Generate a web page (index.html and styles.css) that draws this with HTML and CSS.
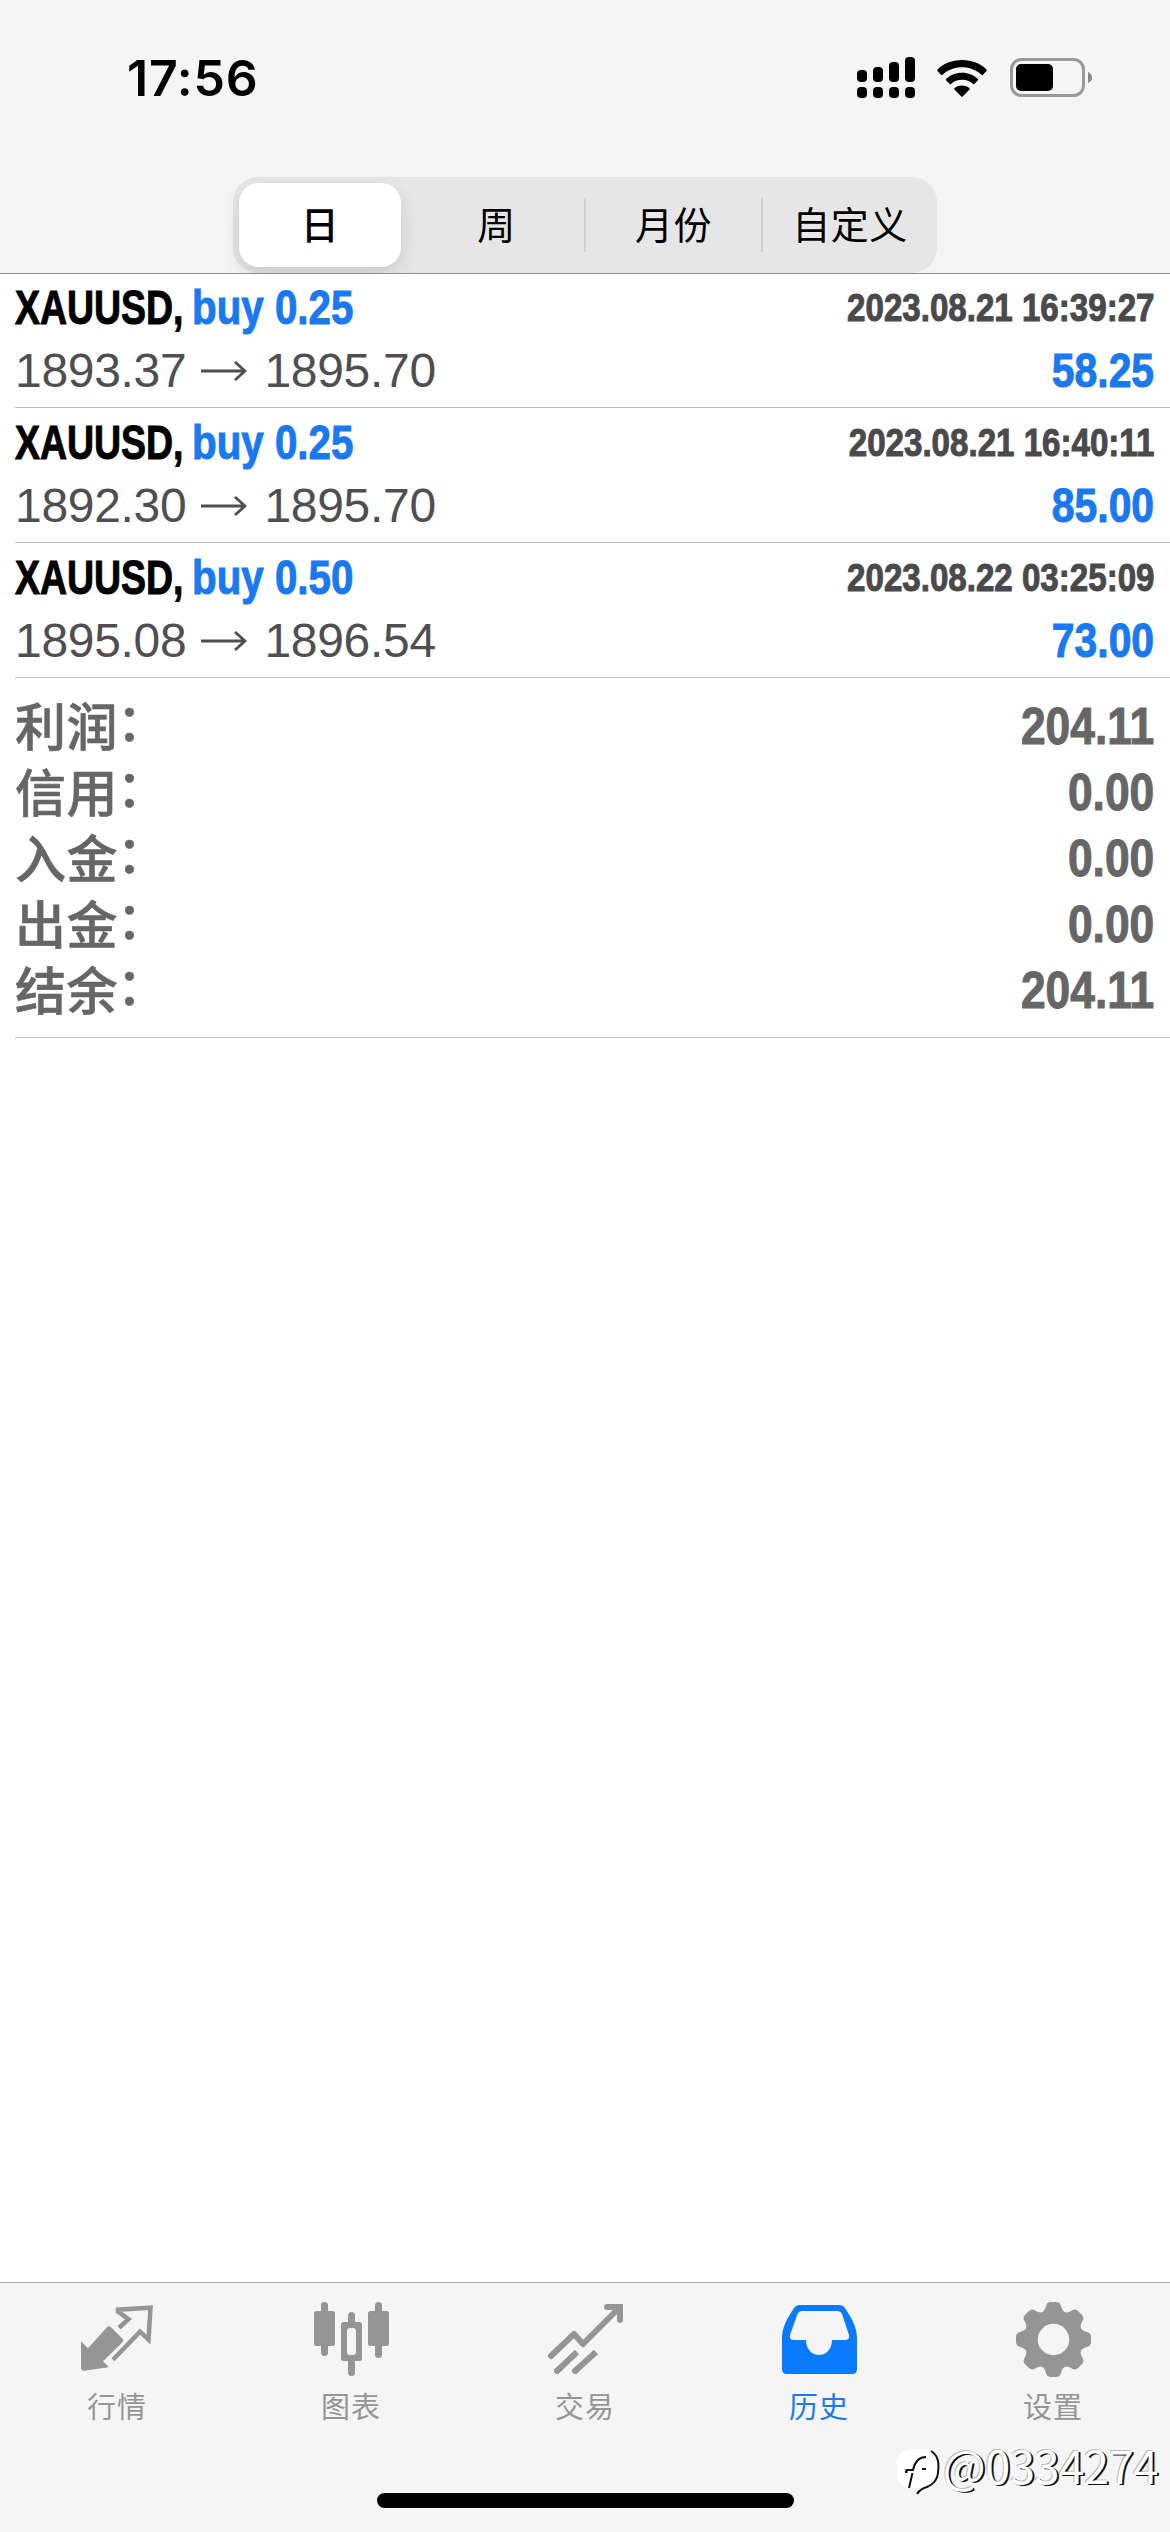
FILE: index.html
```html
<!DOCTYPE html>
<html lang="zh-CN">
<head>
<meta charset="utf-8">
<title>历史</title>
<link rel="stylesheet" href="styles.css">
</head>
<body>
<div class="screen">
  <header class="header">
    <div class="status">
      <span class="time">17:56</span>
      <div class="status-icons">
        <svg class="signal" width="58" height="42" viewBox="0 0 58 42">
          <rect x="0" y="13" width="10" height="12" rx="4"/><rect x="16" y="10" width="10" height="15" rx="4"/><rect x="32" y="5" width="10" height="20" rx="4"/><rect x="48" y="0" width="10" height="25" rx="4"/>
          <rect x="0" y="30" width="10" height="11" rx="4"/><rect x="16" y="30" width="10" height="11" rx="4"/><rect x="32" y="30" width="10" height="11" rx="4"/><rect x="48" y="30" width="10" height="11" rx="4"/>
        </svg>
        <svg class="wifi" width="50" height="37" viewBox="0 0 50 37">
          <path d="M25 0C35 0 43.500 3.500 49.500 9.500Q50 10.300 49.500 11L46 14.700Q45.300 15.300 44.500 14.700C39 9.800 32.500 7.200 25 7.200S11 9.800 5.500 14.700Q4.700 15.300 4 14.700L.5 11Q0 10.300.5 9.500C6.500 3.500 15 0 25 0Z"/>
          <path d="M25 12.700C31.500 12.700 37 15 41 19Q41.500 19.700 41 20.300L37.500 23.800Q36.700 24.500 36 23.900C33 21.200 29.200 19.800 25 19.800S17 21.200 14 23.900Q13.300 24.500 12.500 23.800L9 20.300Q8.500 19.700 9 19C13 15 18.500 12.700 25 12.700Z"/>
          <path d="M25 25.500C28 25.500 30.600 26.500 32.500 28.200Q33 29 32.500 29.600L25.700 36.500Q25 37.100 24.300 36.500L17.500 29.600Q17 29 17.500 28.200C19.400 26.500 22 25.500 25 25.500Z"/>
        </svg>
        <svg class="battery" width="82" height="40" viewBox="0 0 82 40">
          <rect x="1.500" y="1.500" width="72" height="36" rx="10" fill="none" stroke="#999" stroke-width="3"/>
          <rect x="6" y="6" width="37" height="27" rx="5"/>
          <path d="M78 14Q82 16 82 19.500T78 25Z" fill="#888"/>
        </svg>
      </div>
    </div>
    <div class="segments">
      <span class="segment selected">日</span>
      <span class="segment">周</span>
      <span class="segment ruled">月份</span>
      <span class="segment ruled">自定义</span>
    </div>
  </header>
  <main class="content">
    <section class="deal">
      <div class="line"><span class="title"><span class="symbol">XAUUSD,</span><span class="side">buy 0.25</span></span><span class="date">2023.08.21 16:39:27</span></div>
      <div class="line"><span class="prices">1893.37 <svg class="arrow" viewBox="0 0 46 20"><path d="M0 10H44M34 1L44 10L34 19"/></svg> 1895.70</span><span class="gain">58.25</span></div>
    </section>
    <section class="deal">
      <div class="line"><span class="title"><span class="symbol">XAUUSD,</span><span class="side">buy 0.25</span></span><span class="date">2023.08.21 16:40:11</span></div>
      <div class="line"><span class="prices">1892.30 <svg class="arrow" viewBox="0 0 46 20"><path d="M0 10H44M34 1L44 10L34 19"/></svg> 1895.70</span><span class="gain">85.00</span></div>
    </section>
    <section class="deal">
      <div class="line"><span class="title"><span class="symbol">XAUUSD,</span><span class="side">buy 0.50</span></span><span class="date">2023.08.22 03:25:09</span></div>
      <div class="line"><span class="prices">1895.08 <svg class="arrow" viewBox="0 0 46 20"><path d="M0 10H44M34 1L44 10L34 19"/></svg> 1896.54</span><span class="gain">73.00</span></div>
    </section>
    <section class="summary">
      <div class="total"><span class="label">利润<span class="colon">：</span></span><span class="amount">204.11</span></div>
      <div class="total"><span class="label">信用<span class="colon">：</span></span><span class="amount">0.00</span></div>
      <div class="total"><span class="label">入金<span class="colon">：</span></span><span class="amount">0.00</span></div>
      <div class="total"><span class="label">出金<span class="colon">：</span></span><span class="amount">0.00</span></div>
      <div class="total"><span class="label">结余<span class="colon">：</span></span><span class="amount">204.11</span></div>
    </section>
  </main>
  <footer class="footer">
    <nav class="tabs">
      <a class="tab"><svg class="icon" viewBox="0 0 76 76"><g transform="translate(0 3.700)">
        <path fill="#959595" d="M2 35.500L9 42.500 28 21.500Q30 19.500 32 21.500L44 33.500Q45 35 43.500 36.500L24 55.500 29 60.500Q29 62 26 62L5 65Q2 65 2 62Z"/>
        <path fill="none" stroke="#959595" stroke-width="4.500" d="M40 22L49.500 13.500 39 6V4L71.500 2 69.500 34 61 26 34 54"/></g>
      </svg>行情</a>
      <a class="tab"><svg class="icon" viewBox="0 0 76 76"><g fill="#959595">
        <rect x="8" y="0" width="7" height="54" rx="3.500"/><rect x="1" y="9" width="21" height="35" rx="2.500"/>
        <rect x="62" y="0" width="7" height="56" rx="3.500"/><rect x="55" y="9" width="21" height="35" rx="2.500"/>
        <rect x="35" y="10" width="7" height="64" rx="3.500"/><rect x="28" y="20" width="21" height="39" rx="2.500"/></g>
        <rect x="34" y="26" width="9" height="27" rx="3" fill="#f5f5f5"/>
      </svg>图表</a>
      <a class="tab"><svg class="icon" viewBox="0 0 76 76"><g fill="none" stroke="#959595" stroke-width="6" stroke-linecap="round" stroke-linejoin="round">
        <path d="M4 54L27 32 36 42 72 6M60 5H73V18"/><path stroke-linecap="butt" d="M9 70L30 50M27 70L49 50"/><path d="M10 69L12 67M28 69L30 67"/></g>
        <path fill="#959595" d="M68 2H76V10H68Z"/>
      </svg>交易</a>
      <a class="tab active"><svg class="icon" viewBox="0 0 76 76">
        <path fill="#0a7aff" fill-rule="evenodd" d="M18 3H58Q62 3 64 6C70 15 76 25 76 36V67Q76 72 71 72H6Q1 72 1 67V36C1 25 7 15 13 6Q15 3 18 3ZM21 9Q18 9 16.500 12L9 33Q8 38 13 38H25C25 47 31 53 38 53S51 47 51 38H64Q69 38 68 33L61 12Q59.500 9 56 9Z"/>
      </svg>历史</a>
      <a class="tab"><svg class="icon" viewBox="0 0 76 76">
        <g fill="#959595"><circle cx="38.500" cy="37.500" r="29"/>
        <g id="teeth"><path id="tooth" d="M26 11Q30 9 31 4Q32 0 36 0H41Q45 0 46 4Q47 9 51 11V64Q47 66 46 71Q45 75 41 75H36Q32 75 31 71Q30 66 26 64Z"/>
        <use href="#tooth" transform="rotate(90 38.500 37.500)"/></g><use href="#teeth" transform="rotate(45 38.500 37.500)"/></g>
        <circle cx="38.500" cy="37.500" r="15.700" fill="#f5f5f5"/>
      </svg>设置</a>
    </nav>
    <div class="home-bar"></div>
  </footer>
  <div class="watermark">
    <svg class="mark" width="44" height="48" viewBox="0 0 44 48">
      <rect x="0" y="0" width="41" height="39" rx="14" fill="#fff"/>
      <path d="M34 2C42 7 42 15 41 24C40 33 35 36 30 38Q23 40 20 45" fill="none" stroke="#111" stroke-width="2"/>
      <path d="M12 39L15.500 24M8 23H9.500V21H16C18 12 22 8 29 8M25 20H29" fill="none" stroke="#111" stroke-width="2"/>
    </svg><span class="handle">@0334274</span>
  </div>
</div>
</body>
</html>
```
FILE: styles.css
```css
* { box-sizing: border-box; }
body { margin: 0; background: #fff; }
.screen {
  position: relative;
  display: flex;
  flex-direction: column;
  width: 1170px;
  height: 2532px;
  font-family: "Liberation Sans", "Noto Sans CJK SC", sans-serif;
  color: #000;
}
.header {
  display: flex;
  flex-direction: column;
  align-items: center;
  height: 274px;
  background: #f5f5f5;
  border-bottom: 1px solid #8f8f8f;
  overflow: hidden;
}
.status {
  display: flex;
  justify-content: space-between;
  align-items: center;
  width: 100%;
  height: 177px;
  padding: 0 78px 21px 127px;
}
.time { font: 600 50px/60px Inter, sans-serif; letter-spacing: .8px; }
.status-icons { display: flex; align-items: center; }
.wifi { margin-left: 22px; }
.battery { margin-left: 23px; }
.segments {
  display: grid;
  grid-template-columns: 174px 177px 177px 176px;
  width: 704px;
  height: 96px;
  border-radius: 25px;
  background: #e6e6e6;
}
.segment {
  position: relative;
  display: flex;
  align-items: center;
  justify-content: center;
  padding: 0 0 4px 2px;
  font: 400 38px/60px "Noto Sans CJK SC", sans-serif;
  letter-spacing: .5px;
}
.segment.selected {
  margin: 6px;
  padding-left: 0;
  border-radius: 20px;
  background: #fff;
  font-weight: 500;
  box-shadow: 0 8px 20px rgba(0, 0, 0, .12);
}
.segment.ruled::before {
  content: "";
  position: absolute;
  left: 0;
  top: 21px;
  width: 2px;
  height: 54px;
  background: #cfcfd1;
}
.content { flex: 1; }
.deal {
  height: 135px;
  margin-left: 15px;
  padding: 3px 16px 0 0;
  border-bottom: 1px solid #bdbdbf;
}
.deal:first-child { height: 134px; padding-top: 2px; }
.line { display: flex; justify-content: space-between; align-items: center; height: 63px; white-space: nowrap; }
.title { display: flex; }
.symbol, .side, .date, .gain, .amount {
  font-size: 48px;
  font-weight: 700;
  -webkit-text-stroke: 1px currentColor;
}
.symbol { margin-right: -39px; transform: scaleX(.78); transform-origin: left; }
.side { transform: scaleX(.84); transform-origin: left; }
.side, .gain { color: #1a78f0; }
.date { font-size: 38.500px; color: #4a4a4c; transform: scaleX(.86); transform-origin: right; }
.gain { transform: scaleX(.852); transform-origin: right; }
.prices { display: flex; align-items: center; gap: 15px; font-size: 48px; letter-spacing: -.3px; color: #4f4f51; }
.arrow { width: 46px; height: 20px; margin-right: 2px; fill: none; stroke: #4f4f51; stroke-width: 2.800; }
.summary {
  height: 360px;
  margin-left: 15px;
  padding: 15px 16px 0 0;
  border-bottom: 1px solid #bdbdbf;
}
.total { display: flex; justify-content: space-between; align-items: center; height: 66px; color: #666; }
.label { padding-bottom: 4px; font: 500 51px/62px "Noto Sans CJK SC", sans-serif; letter-spacing: .4px; -webkit-text-stroke: .6px currentColor; }
.colon { display: inline-block; transform: translate(-1px, -5px); }
.amount { font-size: 51px; transform: scaleX(.87); transform-origin: right; }
.footer {
  display: flex;
  flex-direction: column;
  align-items: center;
  height: 250px;
  border-top: 1px solid #acacac;
  background: #f5f5f5;
}
.tabs { display: grid; grid-template-columns: repeat(5, 234px); height: 210px; }
.tab {
  display: flex;
  flex-direction: column;
  align-items: center;
  padding-top: 19px;
  font: 400 29px/42px "Noto Sans CJK SC", sans-serif;
  letter-spacing: 1px;
  color: #959595;
}
.tab.active { color: #1a78f0; }
.icon { width: 76px; height: 76px; margin: 0 1px 6px 0; }
.home-bar { width: 417px; height: 15px; border-radius: 8px; background: #000; }
.watermark { position: absolute; left: 897px; top: 2449px; display: flex; align-items: flex-start; }
.mark { flex: none; }
.handle {
  margin: -7px 0 0 2px;
  font: 400 45px/46px "Noto Sans CJK SC", sans-serif;
  letter-spacing: -.3px;
  color: #fff;
  text-shadow: 2px 1px 0 #111, -1px -1px 0 #bbb;
}
```
